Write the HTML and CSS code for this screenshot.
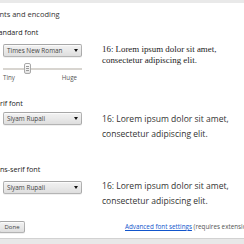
FILE: index.html
```html
<!DOCTYPE html>
<html lang="en">
  <head>
    <meta charset="UTF-8" />
    <title>Fonts and encoding</title>
    <link rel="stylesheet" href="styles.css">
  </head>
  <body>
    <div class="top-band"></div>
    <div class="dialog">
      <h1>Fonts and encoding</h1>

      <section class="font-setting standard">
        <h3>Standard font</h3>
        <div class="setting-row">
          <div class="font-input">
            <div class="select"><span>Times New Roman</span></div>
            <div class="slider">
              <div class="track"></div>
              <div class="thumb"><i></i><i></i><i></i></div>
            </div>
            <div class="slider-labels"><span>Tiny</span><span>Huge</span></div>
          </div>
          <div class="sample serif">16: Lorem ipsum dolor sit amet, consectetur adipiscing elit.</div>
        </div>
      </section>

      <section class="font-setting serif-setting">
        <h3>Serif font</h3>
        <div class="setting-row">
          <div class="font-input">
            <div class="select"><span>Siyam Rupali</span></div>
          </div>
          <div class="sample sans">16: Lorem ipsum dolor sit amet, consectetur adipiscing elit.</div>
        </div>
      </section>

      <section class="font-setting sans-setting">
        <h3>Sans-serif font</h3>
        <div class="setting-row">
          <div class="font-input">
            <div class="select"><span>Siyam Rupali</span></div>
          </div>
          <div class="sample sans">16: Lorem ipsum dolor sit amet, consectetur adipiscing elit.</div>
        </div>
      </section>

      <div class="action-area">
        <button type="button" class="done-btn">Done</button>
        <div class="advanced">
          <a href="#">Advanced font settings</a> (requires extension)
        </div>
      </div>
    </div>
    <div class="bottom-band"></div>
  </body>
</html>
```

FILE: styles.css
```css
html,
body {
  margin: 0;
  padding: 0;
  width: 244px;
  height: 244px;
  overflow: hidden;
  background-color: #ffffff;
}

body {
  font-family: "Open Sans", Arial, sans-serif;
  color: #333333;
}

.top-band {
  height: 3px;
  background-color: #e9e9e9;
}

.dialog {
  margin-left: -9px;
  width: 290px;
}

h1 {
  font-size: 7.5px;
  font-weight: normal;
  line-height: 10px;
  margin: 6px 0 0 0;
  color: #333333;
}

h3 {
  font-size: 7.2px;
  font-weight: normal;
  line-height: 10px;
  margin: 0;
  padding-left: 1px;
  color: #222222;
}

.standard h3 {
  margin-top: 8px;
}

.serif-setting h3 {
  margin-top: 16px;
}

.sans-setting h3 {
  margin-top: 22px;
}

.setting-row {
  display: flex;
  align-items: flex-start;
  padding-left: 12px;
}

.standard .setting-row {
  margin-top: 7px;
}

.serif-setting .setting-row {
  margin-top: 4px;
}

.sans-setting .setting-row {
  margin-top: 5px;
}

.font-input {
  width: 79px;
  margin-right: 20px;
  display: flex;
  flex-direction: column;
}

.sans-setting .select {
  margin-top: 2px;
}

/* looks like a native chrome select */
.select {
  position: relative;
  height: 13px;
  box-sizing: border-box;
  border: 1px solid rgba(0, 0, 0, 0.25);
  border-radius: 2px;
  background: linear-gradient(#f1f1f1, #ebebeb 40%, #dedede);
  box-shadow: 0 1px 0 rgba(0, 0, 0, 0.06), inset 0 1px 1px rgba(255, 255, 255, 0.8);
  padding-left: 3px;
  font-size: 6.4px;
  line-height: 11px;
  color: #444444;
}

.select:after {
  content: "";
  position: absolute;
  right: 3px;
  top: 4px;
  border-left: 2.5px solid transparent;
  border-right: 2.5px solid transparent;
  border-top: 3px solid #111111;
}

.slider {
  position: relative;
  height: 11px;
  margin-top: 6px;
}

.slider .track {
  position: absolute;
  left: 0;
  right: 0;
  top: 5px;
  height: 2px;
  background-color: #d8d5d0;
}

.slider .thumb {
  position: absolute;
  left: 21px;
  top: 0;
  width: 7px;
  height: 11px;
  box-sizing: border-box;
  border: 1px solid #a9a9a9;
  border-radius: 2px;
  background: linear-gradient(#fdfdfd, #e4e4e4);
  display: flex;
  flex-direction: column;
  justify-content: center;
  align-items: center;
}

.slider .thumb i {
  display: block;
  width: 3px;
  height: 1px;
  margin: 0.5px 0;
  background-color: #9a9a9a;
}

.slider-labels {
  display: flex;
  justify-content: space-between;
  padding-right: 5px;
  font-size: 6.2px;
  line-height: 8px;
  color: #555555;
}

.sample {
  width: 150px;
  color: #222222;
}

.sample.serif {
  font-family: "Liberation Serif", "Times New Roman", serif;
  font-size: 8.9px;
  line-height: 10.5px;
}

.sample.sans {
  font-family: "Open Sans", sans-serif;
  font-size: 8.55px;
  line-height: 15px;
  color: #333333;
}

.action-area {
  display: flex;
  align-items: center;
  margin-top: 12px;
  padding-left: 8px;
}

.done-btn {
  width: 26px;
  height: 12px;
  padding: 0;
  border: 1px solid rgba(0, 0, 0, 0.25);
  border-radius: 2px;
  background: linear-gradient(#f1f1f1, #ebebeb 40%, #dedede);
  box-shadow: 0 1px 0 rgba(0, 0, 0, 0.06), inset 0 1px 1px rgba(255, 255, 255, 0.8);
  font-family: "Open Sans", Arial, sans-serif;
  font-size: 6px;
  line-height: 10px;
  color: #444444;
}

.advanced {
  margin-left: 100px;
  font-size: 6.3px;
  line-height: 8px;
  color: #555555;
  white-space: nowrap;
}

.advanced a {
  color: #1155cc;
}

.bottom-band {
  margin-top: 5px;
  height: 10px;
  border-top: 1px solid #d2d2d2;
  background-color: #e8e8e8;
}
```
